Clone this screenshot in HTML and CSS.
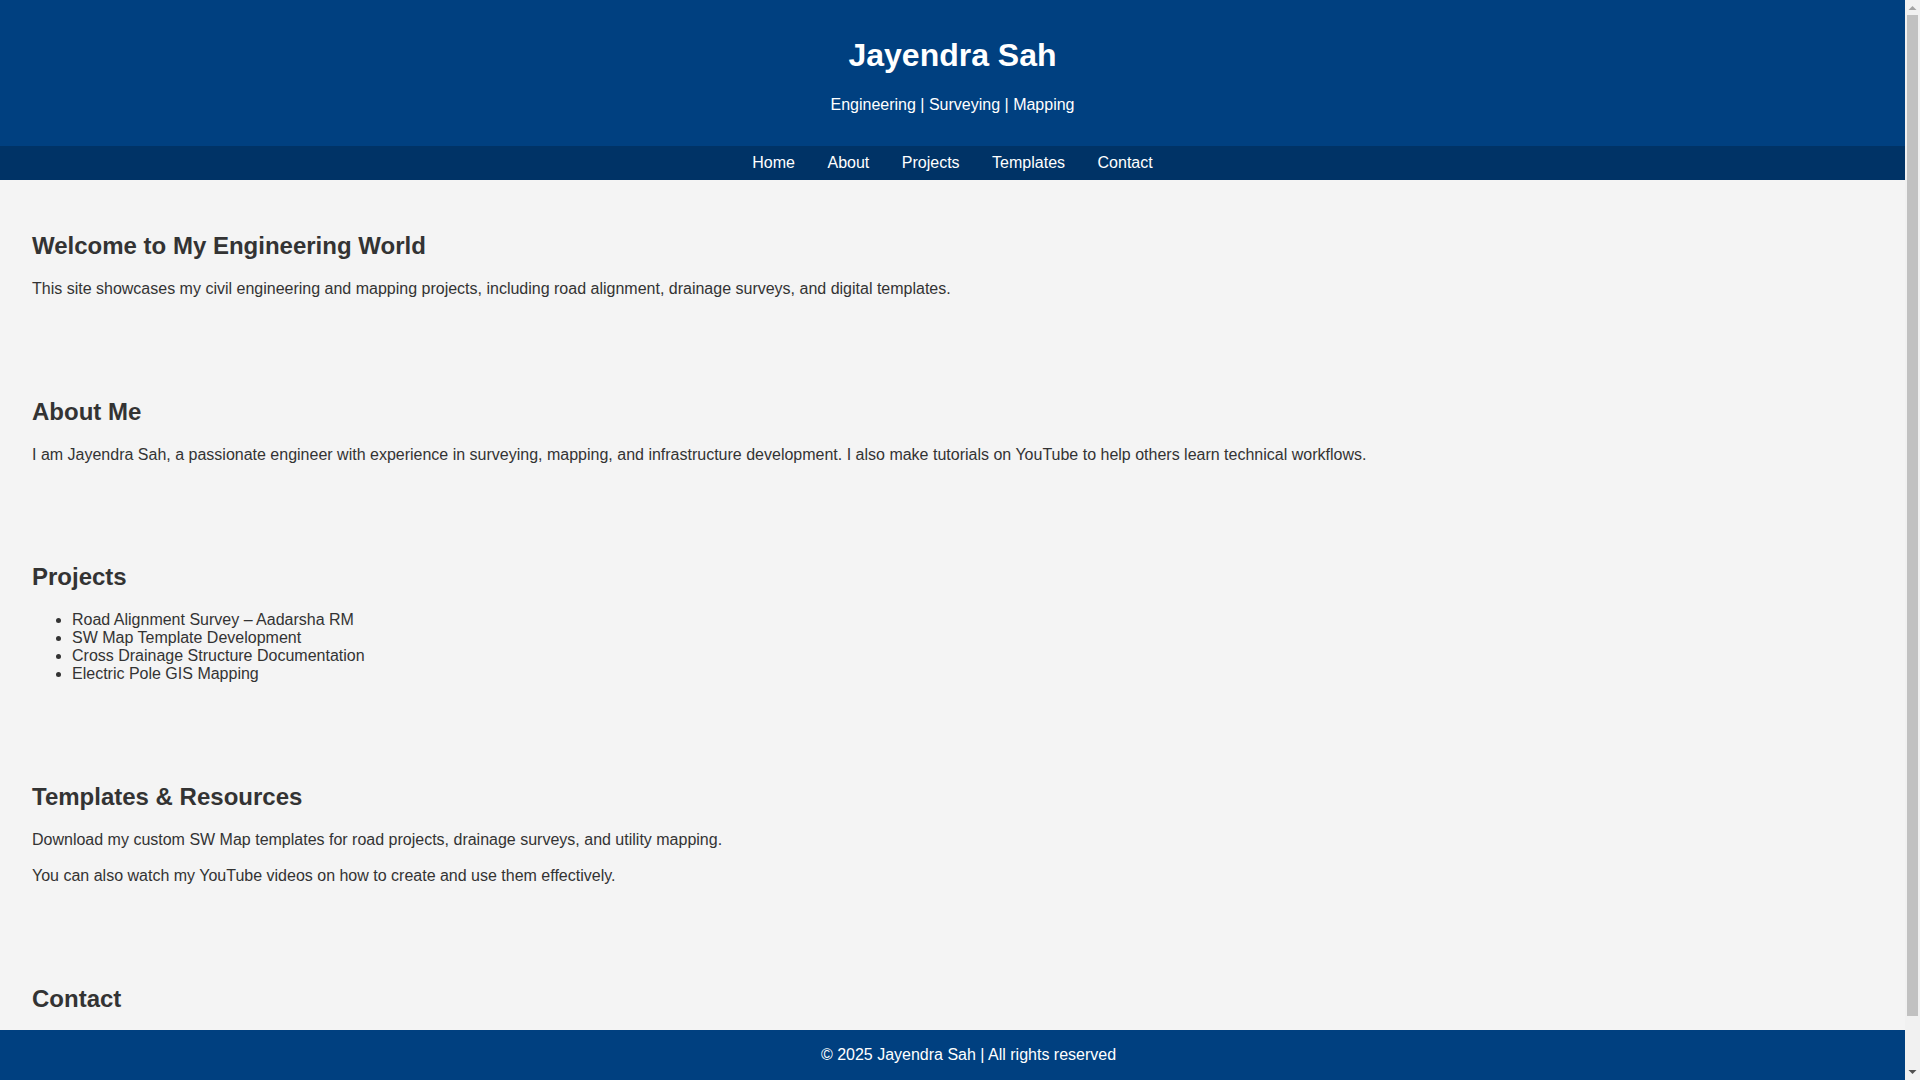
FILE: index.html
```html
<!DOCTYPE html>
<html lang="en">
<head>
<meta charset="utf-8">
<title>Jayendra Sah</title>
<link rel="stylesheet" href="styles.css">
</head>
<body>
<header class="site-header">
  <h1 class="site-title">Jayendra Sah</h1>
  <p class="site-tagline">Engineering | Surveying | Mapping</p>
</header>
<nav class="site-nav">
  <a href="#home">Home</a>
  <a href="#about">About</a>
  <a href="#projects">Projects</a>
  <a href="#templates">Templates</a>
  <a href="#contact">Contact</a>
</nav>
<main>
  <section class="section" id="home">
    <h2>Welcome to My Engineering World</h2>
    <p>This site showcases my civil engineering and mapping projects, including road alignment, drainage surveys, and digital templates.</p>
  </section>
  <section class="section" id="about">
    <h2>About Me</h2>
    <p>I am Jayendra Sah, a passionate engineer with experience in surveying, mapping, and infrastructure development. I also make tutorials on YouTube to help others learn technical workflows.</p>
  </section>
  <section class="section" id="projects">
    <h2>Projects</h2>
    <ul>
      <li>Road Alignment Survey – Aadarsha RM</li>
      <li>SW Map Template Development</li>
      <li>Cross Drainage Structure Documentation</li>
      <li>Electric Pole GIS Mapping</li>
    </ul>
  </section>
  <section class="section" id="templates">
    <h2>Templates &amp; Resources</h2>
    <p>Download my custom SW Map templates for road projects, drainage surveys, and utility mapping.</p>
    <p>You can also watch my YouTube videos on how to create and use them effectively.</p>
  </section>
  <section class="section" id="contact">
    <h2>Contact</h2>
    <p>Email: jayendrasah@example.com</p>
    <p>YouTube: Jayendra Sah</p>
  </section>
</main>
<footer class="site-footer">
  &copy; 2025 Jayendra Sah | All rights reserved
</footer>
<div class="fake-scrollbar" aria-hidden="true">
  <svg class="sb-arrow" width="15" height="15" viewBox="0 0 15 15"><polygon points="3.5,10 11.5,10 7.5,6" fill="#a3a3a3"/></svg>
  <div class="sb-thumb"></div>
  <div class="sb-track"></div>
  <svg class="sb-arrow" width="15" height="15" viewBox="0 0 15 15"><polygon points="3.5,5 11.5,5 7.5,9" fill="#505050"/></svg>
</div>
</body>
</html>
```
FILE: styles.css
```css
html, body {
  margin: 0;
  padding: 0;
}
body {
  font-family: "Liberation Sans", Arial, sans-serif;
  font-size: 16px;
  background: #f4f4f4;
  color: #333333;
  margin-right: 15px;
}
.site-header {
  background: #004080;
  color: #ffffff;
  text-align: center;
  padding: 16px;
}
.site-title {
  font-size: 32px;
  margin: 21.44px 0;
}
.site-tagline {
  margin: 16px 0;
}
.site-nav {
  background: #003366;
  display: flex;
  justify-content: center;
  gap: 32.5px;
  padding: 8px 0;
}
.site-nav a {
  color: #ffffff;
  text-decoration: none;
}
.section {
  padding: 32px;
}
.section h2 {
  font-size: 24px;
  margin: 19.92px 0;
}
.section p {
  margin: 16px 0;
}
.section p + p {
  margin-top: 18px;
}
.section ul {
  margin: 16px 0;
  padding-left: 40px;
}
.site-footer {
  position: fixed;
  left: 0;
  bottom: 0;
  width: calc(100% - 15px);
  background: #004080;
  color: #ffffff;
  text-align: center;
  padding: 16px;
}
.fake-scrollbar {
  position: fixed;
  top: 0;
  right: 0;
  height: 100vh;
  width: 15px;
  background: #f1f1f1;
  display: flex;
  flex-direction: column;
  z-index: 10;
}
.sb-arrow {
  display: block;
  flex: none;
}
.sb-thumb {
  flex: none;
  height: 1001px;
  margin: 0 2px;
  background: #c1c1c1;
}
.sb-track {
  flex: 1;
}
```
